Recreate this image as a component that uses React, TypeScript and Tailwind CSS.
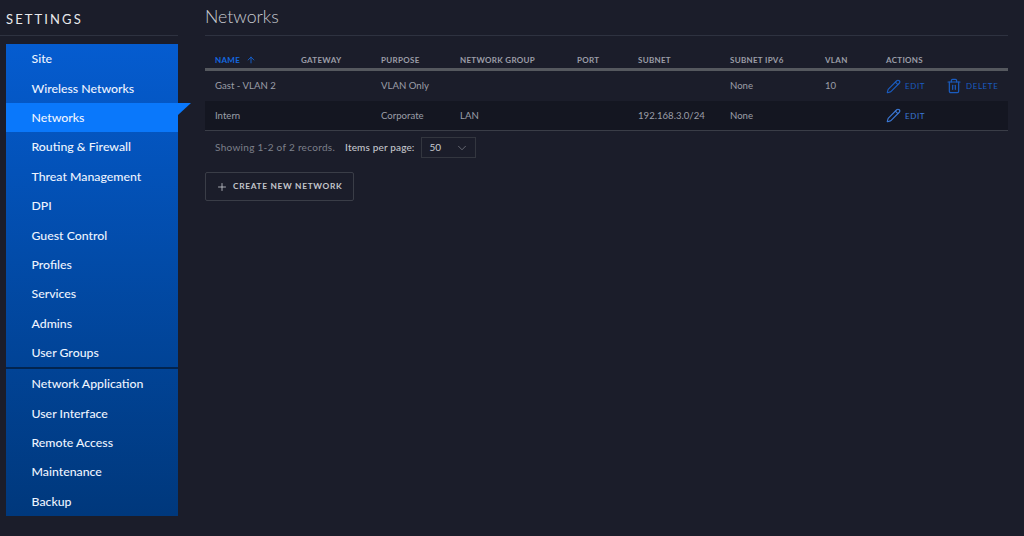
import React from "react";
import { ArrowUp, ChevronDown, Plus, Pencil, Trash2 } from "lucide-react";

const top = ["Site", "Wireless Networks", "Networks", "Routing & Firewall", "Threat Management", "DPI", "Guest Control", "Profiles", "Services", "Admins", "User Groups"];
const bottom = ["Network Application", "User Interface", "Remote Access", "Maintenance", "Backup"];

function Item({ label }: { label: string }) {
  const active = label === "Networks";
  return (
    <div className={`relative flex h-[29.35px] items-center pl-[25.5px] pt-[2px] text-[12.3px] font-medium text-[#eef4ff] ${active ? "bg-[#0a78fb]" : ""}`}>
      {label}
      {active && (
        <svg className="absolute left-[172px] top-0" width="13" height="13" viewBox="0 0 13 13">
          <path d="M0 0H13L0 12Z" fill="#0a78fb" />
        </svg>
      )}
    </div>
  );
}

function Action({ kind }: { kind: "edit" | "delete" }) {
  return (
    <span className={`flex items-center text-[8px] tracking-[0.6px] ${kind === "edit" ? "w-[61px] gap-[4px]" : "gap-[4px]"}`}>
      {kind === "edit" ? <Pencil size={15} strokeWidth={1.8} /> : <Trash2 size={16} strokeWidth={1.8} className="-ml-px" />}
      {kind === "edit" ? "EDIT" : "DELETE"}
    </span>
  );
}

const cols = ["w-[86px]", "w-[80px]", "w-[79px]", "w-[117px]", "w-[61px]", "w-[92px]", "w-[95px]", "w-[61px]", "flex-1"];
const heads = ["GATEWAY", "PURPOSE", "NETWORK GROUP", "PORT", "SUBNET", "SUBNET IPV6", "VLAN", "ACTIONS"];

function Row({ cells, dark, del }: { cells: string[]; dark?: boolean; del?: boolean }) {
  return (
    <div className={`flex h-[29.5px] items-center pl-[10px] pt-px text-[9.6px] text-[#9b9ea8] ${dark ? "bg-[#141621]" : ""}`}>
      {cells.map((c, i) => (
        <div key={i} className={cols[i]}>{c}</div>
      ))}
      <div className={`flex flex-1 items-center ${del ? "text-[#1a5cc0]" : "text-[#3b78d6]"}`}>
        <Action kind="edit" />
        {del && <Action kind="delete" />}
      </div>
    </div>
  );
}

export default function App() {
  return (
    <div className="flex h-[536px] w-full overflow-hidden bg-[#1b1d2a] font-['Lato','Noto_Sans',sans-serif]">
      <aside className="ml-[6px] w-[172px] shrink-0">
        <div className="-ml-[6px] flex h-[36px] items-center border-b border-[#2e3240] pl-[6px] pt-[4px] text-[13px] tracking-[2.1px] text-[#e8e9ec]">
          SETTINGS
        </div>
        <nav className="mt-[8px] h-[472px] bg-gradient-to-b from-[#055cd0] to-[#00387c]">
          {top.map((l) => <Item key={l} label={l} />)}
          <div className="h-[2px] bg-[#02244f]" />
          {bottom.map((l) => <Item key={l} label={l} />)}
        </nav>
      </aside>
      <main className="ml-[27px] w-[803px] shrink-0">
        <div className="flex h-[36px] items-center border-b border-[#2e3240] text-[17.7px] font-light text-[#c9cbd1]">
          Networks
        </div>
        <div className="mt-[8px] flex h-[27px] items-center border-b-[3px] border-[#55585e] pl-[10px] pt-[8px] text-[8px] font-bold tracking-[0.3px] text-[#9b9ea8]">
          <div className={`${cols[0]} flex items-center gap-[6px] text-[#1468e0]`}>
            NAME <ArrowUp size={10} />
          </div>
          {heads.map((h, i) => (
            <div key={h} className={cols[i + 1]}>{h}</div>
          ))}
        </div>
        <Row cells={["Gast - VLAN 2", "", "VLAN Only", "", "", "", "None", "10"]} del />
        <Row cells={["Intern", "", "Corporate", "LAN", "", "192.168.3.0/24", "None", ""]} dark />
        <div className="h-px bg-[#3a3d47]" />
        <div className="mt-[6px] flex h-[21px] items-center pl-[10px] text-[10px]">
          <span className="tracking-[0.3px] text-[#7d808a]">Showing 1-2 of 2 records.</span>
          <span className="ml-[10px] font-medium tracking-[0.15px] text-[#c4c6cc]">Items per page:</span>
          <div className="ml-[6px] flex h-[21px] w-[55px] items-center justify-between border border-[#33363f] pl-[8px] pr-[6px] text-[#c9cbd1]">
            50 <ChevronDown size={14} strokeWidth={1} className="text-[#9a9da6]" />
          </div>
        </div>
        <button className="mt-[14px] flex h-[29px] w-[149px] items-center gap-[5px] rounded-[2px] border border-[#3a3d47] pl-[10px] text-[8.3px] font-bold tracking-[0.7px] text-[#c4c6cc]">
          <Plus size={12} strokeWidth={1.5} className="text-[#d5d7dc]" />
          CREATE NEW NETWORK
        </button>
      </main>
    </div>
  );
}
